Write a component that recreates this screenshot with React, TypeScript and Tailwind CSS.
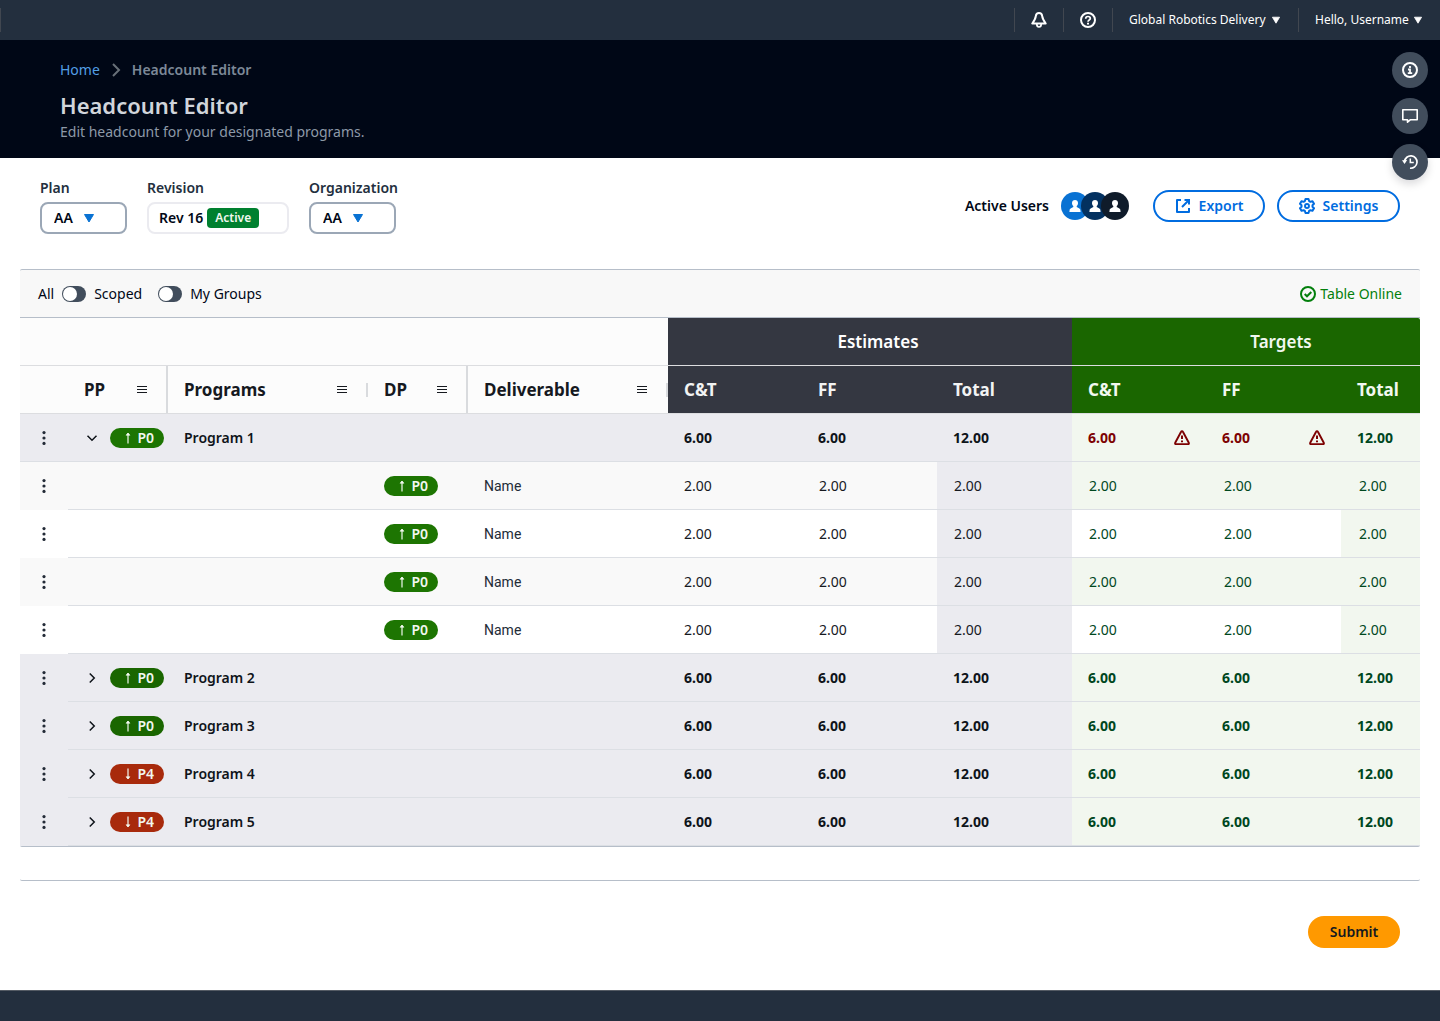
import { useState, type ReactNode } from "react";

type Priority = "P0" | "P4";

function Chevron({ className }: { className: string }) {
  return (
    <svg viewBox="0 0 16 16" className={className} fill="none" stroke="currentColor" strokeWidth="2" aria-hidden="true">
      <path d="M5 2l6 6-6 6" />
    </svg>
  );
}

function Caret({ className }: { className: string }) {
  return (
    <svg viewBox="0 0 12 10" className={className} fill="currentColor" stroke="currentColor" strokeWidth="1" strokeLinejoin="round" aria-hidden="true">
      <path d="M1.500 1.500h9L6 9z" />
    </svg>
  );
}

function Icon({ children, className = "size-4" }: { children: ReactNode; className?: string }) {
  return (
    <svg viewBox="0 0 16 16" className={className} fill="none" stroke="currentColor" strokeWidth="2" strokeLinejoin="round" aria-hidden="true">
      {children}
    </svg>
  );
}

function BellIcon() {
  return (
    <Icon>
      <path d="M8 1C6.200 1 5 2.300 4.800 4.200 4.500 7 3.800 8 1.300 11.500h13.400C12.200 8 11.500 7 11.200 4.200 11 2.300 9.800 1 8 1z" />
      <path d="M5.800 12C5.800 14 6.700 15 8 15s2.200-1 2.200-3" strokeWidth="1.700" />
    </Icon>
  );
}

function HelpIcon() {
  return (
    <Icon>
      <circle cx="8" cy="8" r="7" />
      <path d="M5.700 6.700C5.700 5.300 6.700 4.500 8 4.500s2.300.8 2.300 2c0 1.600-2.300 1.500-2.300 3.300" strokeWidth="1.700" />
      <path d="M8 10.700v1.800" />
    </Icon>
  );
}

function InfoIcon() {
  return (
    <Icon>
      <circle cx="8" cy="8" r="7" />
      <path d="M8 4v2M6 7.500h2V12M5.800 11.200h4.400" strokeWidth="1.800" strokeLinejoin="miter" />
    </Icon>
  );
}

function ChatIcon() {
  return (
    <Icon>
      <path d="M.8 1.800h14.400v10H8.200L5.500 14.200v-2.400H.8z" strokeWidth="1.600" />
    </Icon>
  );
}

function HistoryIcon() {
  return (
    <Icon>
      <path d="M2.600 7.500A6.200 6.200 0 1 1 8 14.200" strokeWidth="1.700" />
      <path d="M0 6.200l5.200-.2-2.700 4z" fill="currentColor" stroke="none" />
      <path d="M8.300 4.500V8.500h3.500" strokeWidth="1.500" strokeLinejoin="miter" />
    </Icon>
  );
}

function ExportIcon() {
  return (
    <Icon>
      <path d="M6 2H2v12h12v-4" />
      <path d="M9.500 2H14v4.500M14 2L7 9" strokeLinejoin="miter" />
    </Icon>
  );
}

function GearIcon() {
  return (
    <Icon>
      <path
        d="M6.500 1h3l.6 2.100 1.300.7 2.100-.6L15 5.800 13.500 7.300v1.400L15 10.200l-1.500 2.600-2.100-.6-1.300.7L9.500 15h-3l-.6-2.100-1.300-.7-2.100.6L1 10.200l1.500-1.500V7.300L1 5.800l1.500-2.600 2.100.6 1.300-.7z"
        strokeWidth="2"
      />
      <circle cx="8" cy="8" r="2" strokeWidth="1.900" />
    </Icon>
  );
}

function WarningIcon() {
  return (
    <Icon>
      <path d="M7.100 1.700L1.200 12.800c-.3.700 0 1.300.7 1.300h12.200c.7 0 1-.6.700-1.300L8.900 1.700c-.4-.8-1.400-.8-1.800 0z" strokeWidth="1.900" />
      <path d="M8 5.500V9M8 10.500v1.800" strokeLinejoin="miter" />
    </Icon>
  );
}

function CheckIcon() {
  return (
    <Icon>
      <circle cx="8" cy="8" r="7" />
      <path d="M4.700 8l2.300 2.300 4.300-4.300" strokeLinejoin="miter" />
    </Icon>
  );
}

function Avatar({ className }: { className: string }) {
  return (
    <span className={`flex size-7 items-center justify-center rounded-full text-white ${className}`}>
      <svg viewBox="0 0 12 12" className="size-3" fill="currentColor" aria-hidden="true">
        <path d="M6 0C4.200 0 3 1.200 3 3c0 1.300.5 2.300 1.300 3v1L2 8.300c-.9.500-1.300 1-1.400 1.900L.400 12h11.200l-.2-1.800c-.1-.9-.5-1.400-1.400-1.900L7.700 7V6C8.500 5.300 9 4.300 9 3c0-1.800-1.200-3-3-3z" />
      </svg>
    </span>
  );
}

function MenuLines() {
  return (
    <button type="button" aria-label="Column menu" className="flex h-4 w-3 items-center justify-center">
      <svg viewBox="0 0 10 8" className="h-2 w-[10px] shrink-0" fill="currentColor" aria-hidden="true">
        <path d="M0 0h10v1H0zM0 3h10v1H0zM0 6h10v1H0z" />
      </svg>
    </button>
  );
}

function Pill({ priority, child = false }: { priority: Priority; child?: boolean }) {
  const up = priority === "P0";
  const color = up ? (child ? "bg-[#1d7502]" : "bg-[#1a6600]") : "bg-[#a82a0c]";
  return (
    <span className={`flex h-5 w-[54px] items-center justify-end gap-[5px] rounded-full pr-[10px] text-sm leading-5 font-semibold text-[#f2f8f0] ${color}`}>
      <svg viewBox="0 0 8 12" className={up ? "h-3 w-2" : "h-3 w-2 rotate-180"} fill="none" stroke="currentColor" strokeWidth="1.200" aria-hidden="true">
        <path d="M4 1v10.500" />
        <path d="M2 3.200L4 1l2 2.200z" fill="currentColor" strokeWidth="0.600" />
      </svg>
      {priority}
    </span>
  );
}

function RowMenu() {
  return (
    <button type="button" aria-label="Row actions" className="mx-auto flex size-6 items-center justify-center text-[#232b37]">
      <svg viewBox="0 0 4 14" className="h-[14px] w-1" fill="currentColor" aria-hidden="true">
        <circle cx="2" cy="1.600" r="1.600" />
        <circle cx="2" cy="7" r="1.600" />
        <circle cx="2" cy="12.400" r="1.600" />
      </svg>
    </button>
  );
}

function SelectField({ id, label, options }: { id: string; label: string; options: string[] }) {
  return (
    <div className="flex flex-col gap-1">
      <label htmlFor={id} className="text-sm leading-5 font-semibold text-[#232f3e]">
        {label}
      </label>
      <div className="relative w-[87px]">
        <select id={id} className="h-8 w-full appearance-none rounded-lg border-2 border-[#9ba7b6] bg-white pl-3 text-sm font-semibold text-[#000716]">
          {options.map((o) => (
            <option key={o}>{o}</option>
          ))}
        </select>
        <Caret className="pointer-events-none absolute top-[11px] left-[43px] h-[10px] w-3 text-[#0972d3]" />
      </div>
    </div>
  );
}

function Toggle({ id, label }: { id: string; label: string }) {
  return (
    <div className="flex items-center gap-2">
      <input
        id={id}
        type="checkbox"
        role="switch"
        className="h-4 w-6 shrink-0 appearance-none rounded-full bg-[#414d5c] p-px before:block before:size-[14px] before:rounded-full before:bg-white checked:before:translate-x-2"
      />
      <label htmlFor={id}>{label}</label>
    </div>
  );
}

const programs: { name: string; priority: Priority; warn?: boolean; children: string[] }[] = [
  { name: "Program 1", priority: "P0", warn: true, children: ["Name", "Name", "Name", "Name"] },
  { name: "Program 2", priority: "P0", children: [] },
  { name: "Program 3", priority: "P0", children: [] },
  { name: "Program 4", priority: "P4", children: [] },
  { name: "Program 5", priority: "P4", children: [] },
];

const line = "border-b border-[#dcdfe4]";

function DeliverableRow({ name, striped }: { name: string; striped: boolean }) {
  const base = striped ? "bg-[#f9f9f9]" : "bg-white";
  const target = striped ? "bg-[#f2f7ef]" : "bg-white";
  return (
    <tr className={`h-12 ${base}`}>
      <td>
        <RowMenu />
      </td>
      <td className={line} />
      <td className={line} />
      <td className={`pl-4 ${line}`}>
        <Pill priority="P0" child />
      </td>
      <td className={`pl-4 font-[Roboto,sans-serif] text-[#232b37] ${line}`}>{name}</td>
      <td className={`pl-4 text-[#16191f] ${line}`}>2.00</td>
      <td className={`pl-[17px] text-[#16191f] ${line}`}>2.00</td>
      <td className={`bg-[#ebebf0] pl-[17px] text-[#16191f] ${line}`}>2.00</td>
      <td className={`pl-[17px] text-[#00471e] ${target} ${line}`}>2.00</td>
      <td className={`pl-[18px] text-[#00471e] ${target} ${line}`}>2.00</td>
      <td className={`bg-[#f2f7ef] pl-[18px] text-[#00471e] ${line}`}>2.00</td>
    </tr>
  );
}

function ProgramRows({ program }: { program: (typeof programs)[number] }) {
  const [open, setOpen] = useState(program.children.length > 0);
  const targetText = program.warn ? "text-[#7d0202]" : "text-[#00471e]";
  const warnCell = (
    <div className="flex items-center justify-between pr-4">
      6.00
      {program.warn && <WarningIcon />}
    </div>
  );
  return (
    <>
      <tr className="h-12 bg-[#ebebf0] font-bold text-[#0f141a]">
        <td className={program.warn ? line : ""}>
          <RowMenu />
        </td>
        <td className={`pl-4 ${line}`}>
          <div className="flex items-center gap-[10px]">
            <button type="button" aria-label={`Toggle ${program.name}`} aria-expanded={open} onClick={() => setOpen(!open)} className="flex size-4 items-center justify-center">
              <Chevron className={open ? "size-3 rotate-90" : "size-3"} />
            </button>
            <Pill priority={program.priority} child={program.warn} />
          </div>
        </td>
        <td className={`pl-4 font-semibold ${line}`}>{program.name}</td>
        <td className={line} />
        <td className={line} />
        <td className={`pl-4 ${line}`}>6.00</td>
        <td className={`pl-4 ${line}`}>6.00</td>
        <td className={`pl-4 ${line}`}>12.00</td>
        <td className={`bg-[#f2f7ef] pl-4 ${targetText} ${line}`}>{warnCell}</td>
        <td className={`bg-[#f2f7ef] pl-4 ${targetText} ${line}`}>{warnCell}</td>
        <td className={`bg-[#f2f7ef] pl-4 text-[#00471e] ${line}`}>12.00</td>
      </tr>
      {open && program.children.map((c, i) => <DeliverableRow key={i} name={c} striped={i % 2 === 0} />)}
    </>
  );
}

function ColumnHead({ title, divider }: { title: string; divider: "full" | "short" }) {
  return (
    <th scope="col" className="h-12 border-b border-[#dcdde0] p-0">
      <div className={`flex h-[47px] items-center justify-between pl-4 ${divider === "full" ? "border-r-2 border-[#d9dbde]" : ""}`}>
        {title}
        <span className="flex items-center">
          <MenuLines />
          <span className={divider === "full" ? "w-[18px]" : "ml-[18px] h-[14px] w-[2px] bg-[#d9dbde]"} />
        </span>
      </div>
    </th>
  );
}

export default function App() {
  return (
    <div className="flex min-h-screen flex-col bg-white font-['Noto_Sans',sans-serif] text-sm text-[#000716]">
      <header className="relative bg-[#000716]">
        <nav aria-label="Utilities" className="flex h-10 items-center bg-[#232f3e] text-xs text-white">
          <span className="h-6 w-px bg-[#414750]" />
          <div className="ml-auto flex h-6 items-center divide-x divide-[#414750] border-l border-[#414750]">
            <button type="button" aria-label="Notifications" className="flex h-6 items-center px-4">
              <BellIcon />
            </button>
            <button type="button" aria-label="Help" className="flex h-6 items-center px-4">
              <HelpIcon />
            </button>
            <button type="button" className="flex h-6 w-[186px] items-center justify-between pr-[17px] pl-4 whitespace-nowrap">
              Global Robotics Delivery
              <Caret className="h-2 w-[10px]" />
            </button>
            <button type="button" className="flex h-6 w-[141px] items-center justify-between pr-[17px] pl-4 whitespace-nowrap">
              Hello, Username
              <Caret className="h-2 w-[10px]" />
            </button>
          </div>
        </nav>
        <div className="px-[60px] pt-5 pb-4">
          <nav aria-label="Breadcrumb" className="flex items-center leading-5">
            <a href="#home" className="text-[#539fe5]">
              Home
            </a>
            <Chevron className="mx-2 size-4 text-[#687078]" />
            <span className="font-semibold text-[#7d8998]">Headcount Editor</span>
          </nav>
          <h1 className="mt-[9px] text-[22px] leading-8 font-semibold text-[#d1d5db]">Headcount Editor</h1>
          <p className="mt-px leading-5 text-[#8d99a8]">Edit headcount for your designated programs.</p>
        </div>
        <div className="absolute top-[52px] right-3 z-10 flex flex-col gap-[10px] text-white">
          <button type="button" aria-label="Info" className="flex size-9 items-center justify-center rounded-full bg-[#414d5c]">
            <InfoIcon />
          </button>
          <button type="button" aria-label="Comments" className="flex size-9 items-center justify-center rounded-full bg-[#414d5c]">
            <ChatIcon />
          </button>
          <button type="button" aria-label="History" className="flex size-9 items-center justify-center rounded-full bg-[#414d5c] shadow-[0_4px_8px_rgba(0,7,22,0.15)]">
            <HistoryIcon />
          </button>
        </div>
      </header>

      <main className="flex-1">
        <section className="flex items-start justify-between px-10 pt-5">
          <div className="flex">
            <SelectField id="plan" label="Plan" options={["AA", "BB"]} />
            <div className="mx-5 flex flex-col gap-1">
              <label htmlFor="revision" className="text-sm leading-5 font-semibold text-[#232f3e]">
                Revision
              </label>
              <output id="revision" className="flex h-8 w-[142px] items-center gap-1 rounded-lg border-2 border-[#ebebf0] pl-[10px] font-semibold">
                Rev 16
                <span className="flex h-5 items-center rounded-sm bg-[#00802f] px-2 text-xs text-[#f2f8f0]">Active</span>
              </output>
            </div>
            <SelectField id="organization" label="Organization" options={["AA", "BB"]} />
          </div>
          <div className="mt-3 flex items-center gap-3 font-semibold">
            <span>Active Users</span>
            <div className="mr-3 flex -space-x-2">
              <Avatar className="bg-[#0972d3]" />
              <Avatar className="bg-[#033160]" />
              <Avatar className="bg-[#0f1b2a]" />
            </div>
            <button type="button" className="flex h-8 w-28 items-center justify-center gap-2 rounded-full border-2 border-[#006ce0] text-[#006ce0]">
              <ExportIcon />
              Export
            </button>
            <button type="button" className="flex h-8 w-[123px] items-center justify-center gap-2 rounded-full border-2 border-[#006ce0] text-[#006ce0]">
              <GearIcon />
              Settings
            </button>
          </div>
        </section>

        <section className="mx-5 mt-[35px] rounded-xs border-b border-[#b6bec9] pb-[33px]">
          <div className="flex h-[49px] items-center justify-between rounded-t-xs border-y border-[#b6bec9] bg-[#f8f8f8] px-[18px]">
            <div className="flex items-center gap-4">
              <div className="flex items-center gap-2">
                <label htmlFor="scoped">All</label>
                <Toggle id="scoped" label="Scoped" />
              </div>
              <Toggle id="groups" label="My Groups" />
            </div>
            <p role="status" className="flex items-center gap-1 text-[#037f0c]">
              <CheckIcon />
              Table Online
            </p>
          </div>
          <table className="w-full table-fixed border-separate border-spacing-0 rounded-b-xs border-b border-[#b6bec9] text-left">
            <colgroup>
              <col className="w-12" />
              <col className="w-[100px]" />
              <col className="w-[200px]" />
              <col className="w-[100px]" />
              <col className="w-[200px]" />
              <col className="w-[134px]" />
              <col className="w-[135px]" />
              <col className="w-[135px]" />
              <col className="w-[134px]" />
              <col className="w-[135px]" />
              <col className="w-[79px]" />
            </colgroup>
            <thead className="text-[17px] leading-6 text-[#16191f]">
              <tr className="h-12">
                <td colSpan={5} className="border-b border-[#dcdde0] bg-[#fcfcfc]" />
                <th scope="colgroup" colSpan={3} className="border-b border-[#dcdde0] bg-[#343741] pl-4 text-center font-semibold text-white">
                  Estimates
                </th>
                <th scope="colgroup" colSpan={3} className="rounded-tr-xs border-b border-[#dcdde0] bg-[#1a6600] pl-[70px] text-center font-semibold text-[#f2f8f0]">
                  Targets
                </th>
              </tr>
              <tr className="h-12 bg-[#fcfcfc]">
                <td className="border-b border-[#dcdde0]" />
                <ColumnHead title="PP" divider="full" />
                <ColumnHead title="Programs" divider="short" />
                <ColumnHead title="DP" divider="full" />
                <ColumnHead title="Deliverable" divider="short" />
                {["C&T", "FF", "Total"].map((t) => (
                  <th key={t} scope="col" className="border-b border-[#dcdde0] bg-[#343741] pl-4 text-[#f2f3f3]">
                    {t}
                  </th>
                ))}
                {["C&T", "FF", "Total"].map((t) => (
                  <th key={t} scope="col" className="border-b border-[#dcdde0] bg-[#1a6600] pl-4 text-[#f2f8f0]">
                    {t}
                  </th>
                ))}
              </tr>
            </thead>
            <tbody>
              {programs.map((p) => (
                <ProgramRows key={p.name} program={p} />
              ))}
            </tbody>
          </table>
        </section>

        <div className="flex justify-end px-10 pt-[35px] pb-[42px]">
          <button type="button" className="h-8 w-[92px] rounded-full bg-[#ff9900] font-semibold text-[#16191f]">
            Submit
          </button>
        </div>
      </main>

      <footer className="h-[31px] border-t border-[#545b64] bg-[#232f3e]" />
    </div>
  );
}
